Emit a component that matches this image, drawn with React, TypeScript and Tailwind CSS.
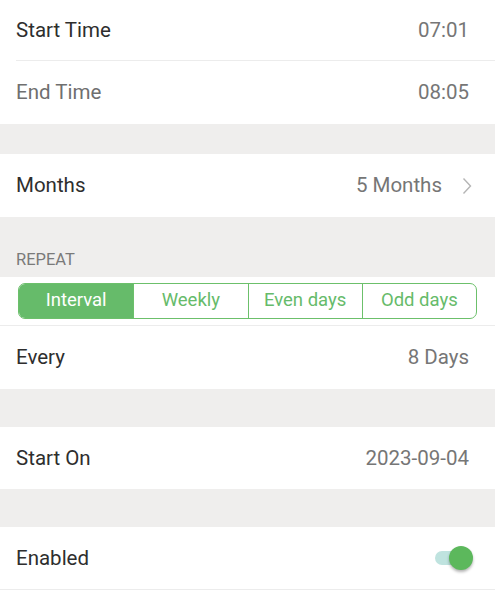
import React from 'react';

const font = { fontFamily: 'Roboto, "Noto Sans", sans-serif' };

const Row: React.FC<{ label: string; value?: React.ReactNode; muted?: boolean; divider?: boolean; h?: string }> = ({
  label,
  value,
  muted,
  divider,
  h = 'h-[63px]',
}) => (
  <div className="bg-white pl-4">
    <div className={`flex ${h} items-center justify-between pr-[26px] ${divider ? 'border-b border-[#ececec]' : ''}`}>
      <span className={`text-[20.5px] ${muted ? 'text-[#6f6f6f]' : 'text-[#2e2e2e]'}`}>{label}</span>
      {value}
    </div>
  </div>
);

const Value: React.FC<{ children: React.ReactNode }> = ({ children }) => (
  <span className="text-[20.5px] text-[#767676]">{children}</span>
);

export default function App() {
  const tabs = ['Interval', 'Weekly', 'Even days', 'Odd days'];

  return (
    <div className="h-[600px] w-[495px] overflow-hidden bg-[#efeeed]" style={font}>
      <Row label="Start Time" value={<Value>07:01</Value>} divider h="h-[61px]" />
      <Row label="End Time" value={<Value>08:05</Value>} muted />

      <div className="h-[30px]" />

      <div className="bg-white pl-4">
        <div className="flex h-[63px] items-center justify-between pr-[23px]">
          <span className="text-[20.5px] text-[#2e2e2e]">Months</span>
          <div className="flex items-center gap-[20px]">
            <Value>5 Months</Value>
            <svg width="10" height="18" viewBox="0 0 10 18" fill="none">
              <path d="M1.5 1.5 L8.5 9 L1.5 16.5" stroke="#b5b5b5" strokeWidth="1.4" />
            </svg>
          </div>
        </div>
      </div>

      <div className="flex h-[60px] items-end px-4 pb-[5px]">
        <span className="text-[16.5px] leading-6 text-[#7a7a7a]">REPEAT</span>
      </div>

      <div className="bg-white px-[18px] pt-[6px] pb-[6px] border-b border-[#ececec]">
        <div className="grid h-[36px] grid-cols-4 overflow-hidden rounded-[7px] border border-[#6cc06b]">
          {tabs.map((t, i) => (
            <div
              key={t}
              className={`flex items-center justify-center text-[18.5px] ${
                i === 0 ? 'bg-[#66bb6a] text-white' : 'border-l border-[#6cc06b] text-[#66bb6a]'
              }`}
            >
              {t}
            </div>
          ))}
        </div>
      </div>

      <Row label="Every" value={<Value>8 Days</Value>} />

      <div className="h-[38px]" />

      <Row label="Start On" value={<Value>2023-09-04</Value>} h="h-[62px]" />

      <div className="h-[38px]" />

      <div className="bg-white pl-4 border-b border-[#ececec]">
        <div className="flex h-[62px] items-center justify-between pr-[22px]">
          <span className="text-[20.5px] text-[#2e2e2e]">Enabled</span>
          <div className="relative h-[24px] w-[38px]">
            <div className="absolute left-0 top-[5px] h-[14px] w-[34px] rounded-full bg-[#bfe3df]" />
            <div className="absolute right-0 top-0 h-[24px] w-[24px] rounded-full bg-[#5cb85c] shadow-[0_2px_3px_rgba(0,0,0,0.3)]" />
          </div>
        </div>
      </div>
      <div className="h-[20px] bg-white" />
    </div>
  );
}
